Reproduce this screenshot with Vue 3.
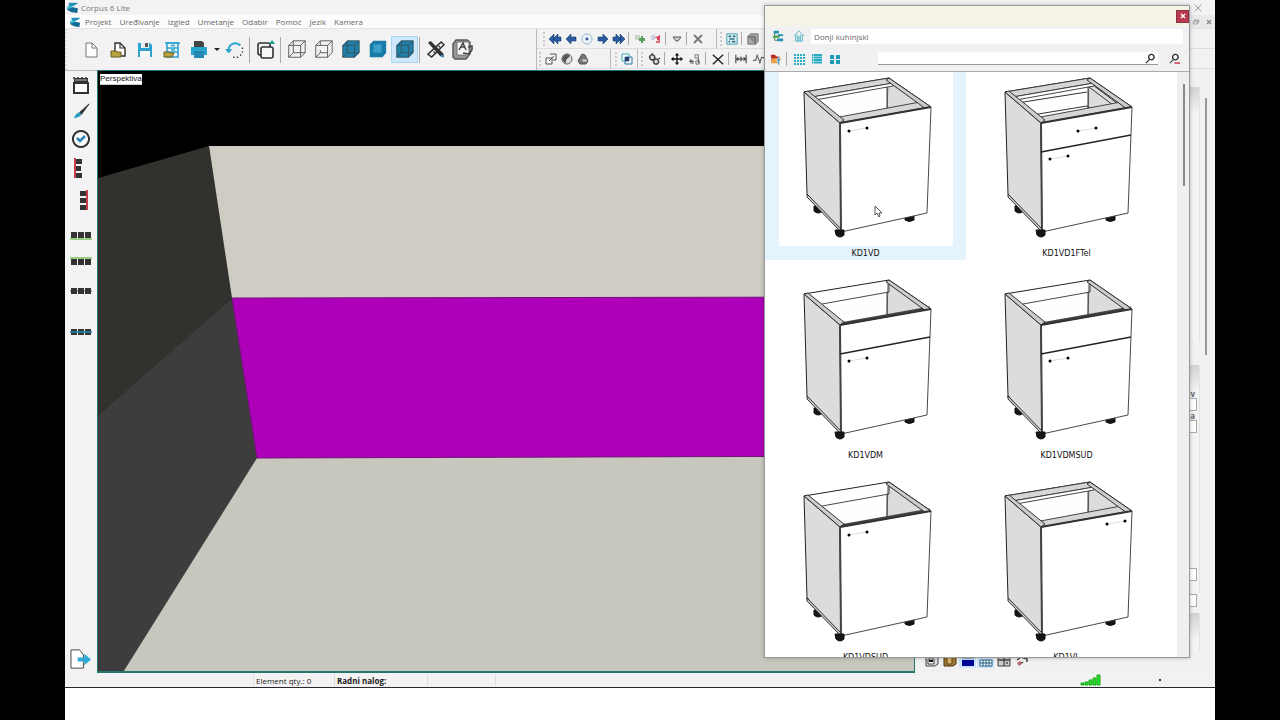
<script setup>
import { h, ref } from 'vue'

const K = '#303030'
const B = '#2aa3cf'
const D = '#1f7fa8'
const N = 'none'

// Each glyph: viewBox side, then [path, fill, stroke, stroke width]
const cubeLines = 'M3 7H16V20H3ZM8 2H21V15H8ZM3 7L8 2M16 7L21 2M16 20L21 15M3 20L8 15'
const glyphs = {
  logo: [14, ['M3 2L13 2Q11 5 5 6L3 5Z', '#1f8fb8', N, 0], ['M1 8L5 6L13 8L12 13L6 12L2 10Z', '#176a94', N, 0], ['M1 6L6 5L7 7L2 9Z', '#39b5cf', N, 0]],
  file: [18, ['M4 2H10L15 7V16H4Z', '#fdfdfd', '#777', 1], ['M10 2V7H15', N, '#777', 1]],
  open: [18, ['M6 2H11L16 7V15H6Z', '#fff', K, 1.4], ['M11 2V7H16', N, K, 1.2], ['M2 10H7L8 11H12V16H2Z', '#b8a340', '#6b5d20', 1]],
  save: [18, ['M2 2H14L16 4V16H2Z', B, N, 0], ['M5 2H13V7H5Z', '#e8edf0', N, 0], ['M9 2H12V6H9Z', '#555', N, 0], ['M4 10H14V16H4Z', '#f7f7f7', N, 0]],
  cabinet: [18, ['M4 2H15V16H4Z', N, B, 1.6], ['M2 2H17M4 7H15M4 11H15M8 4.5H12M8 9H12', N, B, 1.4], ['M1 11H6L7 12H11L9 16H1Z', '#b8a340', '#6b5d20', 1]],
  print: [20, ['M5 1H13L15 3V8H5Z', '#444', N, 0], ['M2 7H18V15H2Z', B, N, 0], ['M5 13H15V18H5Z', '#2589b5', N, 0], ['M5 12H15', N, '#176a94', 1]],
  undo: [20, ['M3 11A7.500 7.500 0 0 1 16 5', N, B, 2.200], ['M-1 9L7 9L3 14Z', B, N, 0], ['M17.500 8H19M17.500 12H19M15.500 15.500H17M12 18H13.500M8 18H9.500', N, K, 1.500]],
  copy: [20, ['M4 3H12Q14 3 14 5V13Q14 15 12 15H4Q2 15 2 13V5Q2 3 4 3Z', '#f2f2f2', K, 1.6], ['M7 7H15Q17 7 17 9V16Q17 18 15 18H7Q5 18 5 16V9Q5 7 7 7Z', '#f7f7f7', K, 1.6], ['M13 4L16 0L19 4Z', '#209a91', N, 0]],
  wire: [23, [cubeLines, N, '#555', 1]],
  wire2: [23, ['M3 7H16V20H3ZM3 7L8 2H21V15L16 20M16 7L21 2M8 2V7M8 15H16M3 20L8 15V12', N, '#555', 1]],
  solid: [23, ['M3 7L8 2H21V15L16 20H3Z', D, N, 0], [cubeLines, N, '#37525e', 1]],
  flat: [23, ['M3 6L7 2H21V15L17 20H3Z', '#187ba8', N, 0], ['M7 6H16V15H7Z', '#3c9fc8', '#2b8fba', 1]],
  tools: [20, ['M16 2L19 5L6 18L2 15Z', '#e8e8e8', K, 1.5], ['M2 3L5 1L18 14L19 18L15 17Z', '#333', N, 0], ['M8 12L10 14M13 6L15 8', N, K, 1.2], ['M16 16L18 18', N, B, 2]],
  render: [22, ['M1 5L4 1H15L18 3V15L14 20H3L1 18Z', '#999', '#555', 1.4], ['M5 3H17V16H5Z', '#f7f7f7', '#777', 1], ['M7 11L11 4L14 11M9 8H13M11 14L17 15L20 11M16 8L20 7L20 11', N, '#444', 1.5]],
  first: [12, ['M0 6L5 1V11ZM4 6L9 1V4H12V8H9V11Z', '#2d5a9e', '#173c70', 0.6]],
  prev: [12, ['M1 6L6 1V4H11V8H6V11Z', '#2d5a9e', '#173c70', 0.6]],
  dot: [12, ['M6 1A5 5 0 1 1 5.9 1Z', '#eef5fa', '#8fb3cc', 1], ['M6 4.5A1.5 1.5 0 1 1 5.9 4.5Z', '#2d5a9e', N, 0]],
  next: [12, ['M11 6L6 1V4H1V8H6V11Z', '#2d5a9e', '#173c70', 0.6]],
  last: [12, ['M12 6L7 1V11ZM8 6L3 1V4H0V8H3V11Z', '#2d5a9e', '#173c70', 0.6]],
  plus: [12, ['M1 2H6V7H1Z', '#c9d6c9', N, 0], ['M5 5H7V3H9V5H11V8H9V10H7V8H5Z', '#55a05a', N, 0]],
  minus: [12, ['M1 3L5 1V7H1Z', '#ccd0e0', N, 0], ['M4 5L10 2V8L7 7V5Z', '#d94b5c', N, 0], ['M6 9H10', N, '#d94b5c', 1.6]],
  funnel: [12, ['M2 4H10L7 8H5Z', '#d0d0d0', '#555', 1]],
  cross: [12, ['M2 2L10 10M10 2L2 10', N, '#777', 1.8]],
  select: [14, ['M1 1H13V13H1Z', '#e3f5f8', '#2d8f9e', 1], ['M3 4H6M8 4H11M4 7H10M3 10H5M7 10H11', N, '#276f80', 2]],
  block: [14, ['M1 4L4 1H13V10L10 13H1Z', '#aaa', '#666', 1], ['M1 4H10V13', '#888', '#666', 1]],
  link: [12, ['M1 5H7V11H1Z', '#f5f5f5', '#555', 1], ['M5 1H11V7H8M4 8L9 3', N, '#555', 1]],
  half: [12, ['M6 1A5 5 0 1 1 5.9 1Z', '#ddd', '#555', 1], ['M2 4A4 4 0 0 1 9 3L5 7V10A4 4 0 0 1 2 4Z', '#555', N, 0]],
  prism: [12, ['M1 8L5 1L8 2L11 8L9 11H3Z', '#777', '#555', 1], ['M5 6H10V9H5Z', '#ddd', '#777', 1]],
  overlap: [12, ['M1 1H8V8H1Z', '#fff', '#3ba3b8', 1], ['M4 4H11V11H4Z', N, '#2d7fa8', 1], ['M4 4H8V8H4Z', '#39386e', N, 0]],
  gears: [14, ['M5 2A3 3 0 1 1 4.9 2ZM9.500 7A3 3 0 1 1 9.400 7Z', '#ddd', '#444', 1.8], ['M5 0V2M1 5H2M12 7L14 6', N, '#444', 1.5]],
  move: [14, ['M7 1V13M1 7H13', N, '#111', 1.5], ['M7 0L9.500 3H4.500ZM7 14L4.500 11H9.500ZM0 7L3 4.500V9.500ZM14 7L11 9.500V4.500Z', '#111', N, 0]],
  snap: [14, ['M7 2H11V6H7ZM2 9H5V12H2ZM8 9H12V13H8Z', '#ddd', '#777', 1], ['M2 7V10M0 10H5M11 6V12', N, '#444', 1]],
  cut: [14, ['M1 2L13 13M13 2L1 13', N, '#222', 1.6]],
  dim: [14, ['M1 2V12M13 2V12M1 7H13M4 5L2 7L4 9M10 5L12 7L10 9M7 4V10', N, '#333', 1.2]],
  zigzag: [14, ['M0 9L3 8L5 3L8 11L10 5L14 6', N, '#555', 1.2], ['M2 7H4V9H2ZM4 2H6V4H4ZM7 10H9V12H7Z', '#777', N, 0]],
  oven: [18, ['M2 2H16V6H2Z', '#333', N, 0], ['M2 7H16V17H2Z', '#fff', '#333', 2], ['M3 4H15', N, '#bbb', 1], ['M2 1V3M6 1V3M10 1V3M14 1V3', N, '#333', 1.5]],
  brush: [20, ['M18 2L8 11L10 13Z', '#333', '#333', 1], ['M2 17Q4 11 8 11L10 13Q8 17 2 17Z', '#2ba0c4', N, 0]],
  check: [20, ['M10 2A8 8 0 1 1 9.900 2Z', '#fafafa', '#333', 2], ['M6 9L9 12L14 7', N, '#2b88b5', 2.600]],
  alignL: [22, ['M5 1V21', N, '#c42a3a', 1.800], ['M6 2H12V7H6ZM6 9H11V14H6ZM6 16H12V21H6Z', '#333', N, 0]],
  alignR: [22, ['M17 1V21', N, '#c42a3a', 1.800], ['M10 2H16V7H10ZM10 9H16V14H10ZM10 16H16V21H10Z', '#333', N, 0]],
  alignB: [22, ['M0 15H22', N, '#65b848', 1.300], ['M1 8H7V14H1ZM8 8H14V14H8ZM15 8H21V14H15Z', '#333', N, 0]],
  alignT: [22, ['M0 7H22', N, '#65b848', 1.300], ['M1 8H7V14H1ZM8 8H14V14H8ZM15 8H21V14H15Z', '#333', N, 0]],
  spread: [22, ['M0 11H22', N, '#4b9ba5', 1.300], ['M1 8H7V14H1ZM8 8H14V14H8ZM15 8H21V14H15Z', '#333', N, 0]],
  spread2: [22, ['M1 8H7V14H1ZM8 8H14V14H8ZM15 8H21V14H15Z', '#333', N, 0], ['M0 11H22', N, '#1b83a8', 1.600]],
  exit: [24, ['M1 2H10L14 7V21H1Z', '#fff', '#444', 1], ['M8 10H15V6L22 12L15 18V14H8Z', '#30a9d6', N, 0]],
  tree: [14, ['M3 2H8M3 7H8M3 12H8M3 2V12', N, '#4f9a48', 1.300], ['M2 1H8V4H2ZM7 5H13V7H7ZM6 10H13V13H6Z', '#2191b5', N, 0], ['M1 7H9V9H1Z', '#4f9a48', N, 0]],
  home: [14, ['M1 7L7 1L13 7M3 6V13H11V6M6 13V8H8V13M5 5V13M9 5V13', N, '#53b3c9', 1]],
  folder: [14, ['M1 2H6L7 4H11V10H2Z', '#b52a20', N, 0], ['M1 11L3 6H13L11 12H1Z', '#eca047', N, 0], ['M7 9L10 5L13 9H11V14H9V9Z', '#3f9fce', '#fff', 0.500]],
  grid: [12, ['M1 1H3V3H1ZM4 1H6V3H4ZM7 1H9V3H7ZM10 1H12V3H10ZM1 4H3V6H1ZM4 4H6V6H4ZM7 4H9V6H7ZM10 4H12V6H10ZM1 7H3V9H1ZM4 7H6V9H4ZM7 7H9V9H7ZM10 7H12V9H10ZM1 10H3V12H1ZM4 10H6V12H4ZM7 10H9V12H7ZM10 10H12V12H10Z', '#2aabc4', N, 0]],
  list: [12, ['M1 2H2.500M3 2H11M1 4.500H2.500M3 4.500H11M1 7H2.500M3 7H11M1 9.500H2.500M3 9.500H11', N, '#2aabc4', 1.900]],
  tiles: [12, ['M1 2H5V6H1ZM7 2H11V6H7ZM1 7H5V11H1ZM7 7H11V11H7Z', '#1e9cba', N, 0]],
  search: [12, ['M7 1.500A3 3 0 1 1 6.900 1.500Z', '#fff', '#222', 1.500], ['M5 7L1 11', N, '#222', 1.300]],
  searchOff: [12, ['M7 1.500A3 3 0 1 1 6.900 1.500Z', '#fff', '#222', 1.500], ['M5 7L1 11', N, '#444', 1.300], ['M6 11H12', N, '#c92b44', 1.500]],
  close: [12, ['M2 2L10 10M10 2L2 10', N, '#8a8a8a', 1]],
  closeX: [12, ['M3 3L9 9M9 3L3 9', N, '#8a8a8a', 2]],
  restore: [12, ['M2 5H8V9H2ZM4 5V3H10V7H8', N, '#8a9298', 1.200]],
  closeW: [12, ['M3 3L9 9M9 3L3 9', N, '#fff', 2.200]],
  part1: [16, ['M2 5L5 2H14V12L11 14H2Z', '#ddd', '#444', 1], ['M4 7H10V12H4Z', '#fff', '#444', 1], ['M5 9H9', N, '#111', 2]],
  part2: [16, ['M2 6L6 2H14V12L11 14H2Z', '#a47a35', '#443010', 1], ['M5 5H10V12H5Z', '#d9b469', '#54401a', 1]],
  part3: [16, ['M2 8H14V14H2Z', '#00009b', N, 0], ['M3 3H7M9 3H13M2 6H14', N, '#369', 1]],
  part4: [16, ['M2 8H14V14H2Z', '#fff', '#235c80', 1], ['M5 8V14M8 8V14M11 8V14M2 11H14M3 4H13', N, '#235c80', 1]],
  part5: [16, ['M2 3H14V14H2Z', '#ccc', '#444', 1], ['M8 3V14M2 8H14M10 11H12', N, '#444', 1.300]],
  part6: [16, ['M3 8L7 5L13 7V10M5 13L9 10', N, '#444', 1.500], ['M3 11L6 9L8 11L5 14Z', '#bb6670', N, 0]],
}

const Icon = ({ name, size }) => {
  const [box, ...paths] = glyphs[name]
  return h('svg', { class: 'icon', width: size, height: size, viewBox: `0 0 ${box} ${box}`, 'aria-hidden': 'true' },
    paths.map(([d, fill, stroke, w]) => h('path', { d, fill, stroke, 'stroke-width': w })))
}
Icon.props = ['name', 'size']

const menus = ['Projekt', 'Uređivanje', 'Izgled', 'Umetanje', 'Odabir', 'Pomoć', 'Jezik', 'Kamera']
const mainTools = [
  ['file', 18], ['open', 18], ['save', 18], ['cabinet', 18], ['print', 20], ['caret'], ['undo', 18], ['|'], ['copy', 20], ['|'],
  ['wire', 21], ['wire2', 21], ['solid', 21], ['flat', 21], ['solid', 21, true], ['|'], ['tools', 19], ['render', 22],
]
const rowOne = [
  ['first', 'prev', 'dot', 'next', 'last', '|', 'plus', 'minus', '|', 'funnel', '|', 'cross'],
  ['select', '|', 'block'],
]
const rowTwo = [['link', 'half', 'prism'], ['overlap'], ['gears', '|', 'move', 'snap', '|', 'cut', '|', 'dim', 'zigzag']]
const sideTools = [['oven', 18], ['brush', 19], ['check', 20], ['alignL', 22], ['alignR', 22], ['alignB', 22], ['alignT', 22], ['spread', 22], ['spread2', 22]]

const cabinets = [
  { name: 'KD1VD', rails: true, handle: [71, 59] },
  { name: 'KD1VD1FTel', rails: true, drawer: true, box: true, knob: true, handle: [71, 87] },
  { name: 'KD1VDM', drawer: true, handle: [71, 87] },
  { name: 'KD1VDMSUD', drawer: true, notch: true, handle: [71, 87] },
  { name: 'KD1VDSUD', notch: true, handle: [71, 59] },
  { name: 'KD1VL', rails: true, handle: [128, 48] },
]
const selected = ref('KD1VD')
const path = ref('Donji kuhinjski')
const query = ref('')
</script>

<template>
  <div class="page">
    <div class="app">
      <header class="titlebar">
        <Icon name="logo" :size="13" /><span>Corpus 6 Lite</span>
        <button class="win" aria-label="Close"><Icon name="close" :size="10" /></button>
      </header>
      <nav class="menubar">
        <Icon name="logo" :size="12" />
        <button v-for="m in menus" :key="m">{{ m }}</button>
        <span class="mdi">
          <button aria-label="Restore"><Icon name="restore" :size="8" /></button>
          <button aria-label="Close document"><Icon name="closeX" :size="8" /></button>
        </span>
      </nav>
      <div class="toolbars">
        <div class="maintools">
          <template v-for="(t, i) in mainTools" :key="i">
            <i v-if="t[0] === '|'" class="sep"></i>
            <button v-else-if="t[0] === 'caret'" class="caret" aria-label="Print options"></button>
            <button v-else :class="{ on: t[2] }" :aria-label="t[0]"><Icon :name="t[0]" :size="t[1]" /></button>
          </template>
        </div>
        <div class="minitools">
          <div v-for="(row, r) in [rowOne, rowTwo]" :key="r" class="minirow" :class="{ second: r === 1 }">
            <div v-for="(g, j) in row" :key="j" class="group">
              <template v-for="(n, i) in g" :key="i">
                <i v-if="n === '|'" class="sep"></i>
                <button v-else :aria-label="n"><Icon :name="n" :size="12" /></button>
              </template>
            </div>
          </div>
        </div>
      </div>

      <main class="work">
        <aside class="side">
          <button v-for="t in sideTools" :key="t[0]" :class="t[0]" :aria-label="t[0]"><Icon :name="t[0]" :size="t[1]" /></button>
          <button class="exit" aria-label="exit"><Icon name="exit" :size="23" /></button>
        </aside>
        <section class="viewport">
          <svg class="scene" viewBox="0 -1 816 600" preserveAspectRatio="xMinYMin slice" aria-label="Room">
            <path d="M0 106L111 74L135 227L0 343Z" fill="#31312d" />
            <path d="M0 343L135 226L159 386L25 602H0Z" fill="#3d3d3d" />
            <path d="M111 74H816V226L134 226Z" fill="#cfccc3" />
            <path d="M134 226L816 225V384L159 386Z" fill="#ae00b8" />
            <path d="M159 386L816 384V602H24Z" fill="#c8c7be" />
            <path d="M134 226L816 225M159 386L816 384M134 226L159 386" fill="none" stroke="#79107f" stroke-width="1" />
          </svg>
          <span class="tag">Perspektiva</span>
        </section>
        <aside class="props">
          <div class="scroll"></div>
          <div class="panel first"></div>
          <div class="panel second">
            <label for="p1">iv</label><input id="p1" />
            <label for="p2">a</label><input id="p2" />
            <input class="low" aria-label="Width" /><input class="lower" aria-label="Height" />
          </div>
          <div class="panel third"></div>
          <div class="parts">
            <button v-for="n in 6" :key="n" :class="{ on: n === 3 || n === 4 }" :aria-label="'View ' + n"><Icon :name="'part' + n" :size="16" /></button>
          </div>
        </aside>
      </main>

      <footer class="status">
        <span class="cell blank"></span>
        <span class="cell qty">Element qty.: 0</span>
        <span class="cell order">Radni nalog:</span>
        <span class="cell extra"></span>
        <svg class="signal" width="21" height="12" viewBox="0 0 21 12"><path d="M1 9H4V11H1ZM5 8H8V11H5ZM9 6H12V11H9ZM13 4H16V11H13ZM17 1H20V11H17Z" fill="#2be52b" stroke="#15a515" /></svg>
        <span class="bullet"></span>
      </footer>
      <div class="below"></div>

      <section class="dialog">
        <div class="dtitle"><button aria-label="Close library"><Icon name="closeW" :size="8" /></button></div>
        <div class="drow">
          <button aria-label="Tree"><Icon name="tree" :size="12" /></button>
          <button aria-label="Home"><Icon name="home" :size="12" /></button>
          <input v-model="path" class="path" aria-label="Folder" />
        </div>
        <div class="drow tools">
          <button aria-label="Up"><Icon name="folder" :size="12" /></button>
          <i class="sep"></i>
          <button aria-label="Small icons"><Icon name="grid" :size="12" /></button>
          <button aria-label="List"><Icon name="list" :size="12" /></button>
          <button aria-label="Tiles"><Icon name="tiles" :size="12" /></button>
          <div class="find">
            <input v-model="query" aria-label="Search" />
            <button aria-label="Search"><Icon name="search" :size="11" /></button>
          </div>
          <button class="off" aria-label="Clear search"><Icon name="searchOff" :size="11" /></button>
        </div>
        <div class="list">
          <div class="cards">
            <button v-for="c in cabinets" :key="c.name" class="card" :class="{ picked: selected === c.name }" @click="selected = c.name">
              <svg class="pic" width="174" height="174" viewBox="1 0 174 174">
                <g stroke-linejoin="round">
                  <path d="M36 134H45V139Q40 143 36 139ZM127 143H136V148Q131 151 127 148Z" fill="#151515" stroke="#111" />
                  <path d="M26 20L111 6L153 35L62 51Z" fill="#fefefe" stroke="#222" />
                  <path d="M110 9L147 35L109 42Z" fill="#dcdcdc" stroke="#333" stroke-width="0.700" />
                  <path v-if="c.box" d="M47 44L108 34L113 37M110 15L134 33M114 13L139 32M38 31L108 20" fill="none" stroke="#333" />
                  <g v-if="c.rails" stroke="#333" stroke-width="0.900">
                    <path d="M26 20L111 6L115 11L34 25Z" fill="#d6d6d6" />
                    <path d="M34 25L115 11V14L37 28Z" fill="#fff" />
                    <path d="M56 46L142 30L151 35L62 51Z" fill="#d6d6d6" />
                    <path d="M109 15V36" fill="none" />
                  </g>
                  <g v-else fill="none" stroke="#333" stroke-width="0.900">
                    <path d="M44 30L111 18V9M109 18V41" />
                    <path d="M62 50L152 34" stroke="#444" stroke-width="3" />
                  </g>
                  <path d="M26 20L62 51L63 160L29 122Z" fill="#dcdcdc" stroke="#222" />
                  <path v-if="c.notch" d="M29 122L32 127L36 131" fill="none" stroke="#222" stroke-width="2" />
                  <path d="M26 20L30 19L66 48L62 51ZM29 122L63 157V160L29 125Z" fill="#ccc" stroke="#222" stroke-width="0.900" />
                  <path d="M108 8L111 6L153 35L148 37Z" fill="#ccc" stroke="#222" stroke-width="0.900" />
                  <path d="M62 51L153 35L149 141L63 160Z" fill="#fff" stroke="#333" stroke-width="0.900" />
                  <path d="M62 52L63 160" stroke="#444" stroke-width="2" />
                  <path d="M62 51L153 35" stroke="#333" stroke-width="2" />
                  <path v-if="c.drawer" d="M62 80L152 63" stroke="#222" stroke-width="1.300" />
                  <path d="M57 158H66V163Q62 167 58 163Z" fill="#151515" stroke="#111" />
                  <g v-for="(p, k) in (c.knob ? [c.handle, [99, 59]] : [c.handle])" :key="k">
                    <path :d="`M${p[0]} ${p[1]}L${p[0] + 18} ${p[1] - 3}`" stroke="#ddd" />
                    <circle :cx="p[0]" :cy="p[1]" r="1.500" /><circle :cx="p[0] + 18" :cy="p[1] - 3" r="1.500" />
                  </g>
                </g>
              </svg>
              <span>{{ c.name }}</span>
            </button>
          </div>
          <div class="bar"><i></i></div>
          <svg class="pointer" width="9" height="13" viewBox="0 0 9 13"><path d="M1 1V10L3 8L5 12L6 11L5 8H8Z" fill="#fff" stroke="#444" stroke-width="0.900" /></svg>
        </div>
      </section>
    </div>
  </div>
</template>

<style>
html, body { margin: 0; background: #000; }
.icon { display: block; flex: none; overflow: visible; }
</style>

<style scoped>
* { box-sizing: border-box; }
button { border: 0; padding: 0; margin: 0; background: none; font: inherit; color: inherit; display: flex; align-items: center; justify-content: center; flex: none; }
input { border: 0; padding: 0; margin: 0; font: inherit; color: inherit; outline: 0; min-width: 0; border-radius: 0; }
.page { min-height: 100vh; display: flex; padding: 0 65px; background: #000; font-family: "Open Sans", "Noto Sans", sans-serif; font-size: 8px; color: #666; }
.app { position: relative; flex: 1; min-width: 0; display: flex; flex-direction: column; background: #f1f1f1; }
.titlebar { height: 15px; display: flex; align-items: center; gap: 2px; background: #f3f3f3; padding: 0 12px 0 1px; color: #777; }
.win { margin-left: auto; }
.menubar { height: 13px; display: flex; align-items: center; gap: 8px; background: #fcfcfc; padding-left: 4px; }
.menubar > svg { margin-right: -4px; }
.mdi { margin-left: auto; display: flex; }
.mdi button { width: 13px; height: 13px; background: #e9e9e9; }
.toolbars { height: 42px; display: flex; border-top: 1px solid #e3e3e3; background: #f2f2f2; }
.maintools { width: 471px; display: flex; align-items: center; padding-left: 10px; border-left: 2px dotted #ddd; }
.maintools button { width: 27px; height: 27px; }
.maintools button.on { background: #cce8fa; box-shadow: inset 0 0 0 1px #a9d5f0; }
.maintools .caret { width: 9px; }
.caret::after { content: ""; border: 3px solid transparent; border-top-color: #222; border-bottom: 0; }
.maintools .sep { width: 3px; height: 26px; }
.sep { flex: none; border-left: 1px solid #aaa; margin-left: 1px; }
.minitools { flex: 1; min-width: 0; border-left: 1px solid #bbb; }
.minirow { height: 20px; display: flex; border-bottom: 1px solid #ddd; }
.group { display: flex; align-items: center; padding: 0 10px 0 6px; border-right: 1px solid #bbb; }
.group::before { content: ""; height: 14px; border-left: 2px dotted #ccc; margin-right: 2px; }
.group button { width: 16px; height: 16px; }
.group .sep { width: 4px; height: 13px; }
.group:last-child { border-right: 0; padding: 0 0 0 3px; }
.second .group:first-child { padding-left: 2px; padding-right: 19px; }
.second .group:nth-child(2) { padding: 0 2px 0 4px; }
.second .group:last-child button { width: 18px; }
.work { flex: 1; min-height: 0; display: flex; }
.side { width: 32px; display: flex; flex-direction: column; align-items: center; border-top: 1px solid #bbb; background: #f3f3f3; }
.side button { width: 30px; height: 27px; }
.side .alignL, .side .alignR { height: 32px; }
.side .alignB { margin-top: 5px; }
.side .spread { margin-top: 2px; }
.side .spread2 { margin-top: 14px; }
.side .exit { margin-top: auto; }
.viewport { position: relative; flex: 1; min-width: 0; border: 1px solid #23776c; border-width: 1px 1px 2px 1px; background: #000; overflow: hidden; }
.scene { position: absolute; inset: 0; width: 100%; height: 100%; }
.tag { position: absolute; left: 2px; top: 3px; height: 11px; line-height: 10px; background: #fff; border: 1px solid #ccc; border-width: 0 0 1px 0; color: #222; font-family: "Liberation Sans", sans-serif; }
.props { position: relative; width: 300px; display: flex; flex-direction: column; padding-top: 17px; background: #f1f1f1; font-weight: 700; }
.scroll { position: absolute; right: 8px; top: 28px; width: 2px; height: 257px; background: #999; }
.panel { margin-right: 15px; border-right: 1px solid #e3e3e3; background: linear-gradient(#d2d2d2, #f3f3f3 25px); }
.panel.first { height: 255px; }
.panel.second { height: 228px; margin-top: 23px; padding-right: 6px; display: flex; flex-direction: column; align-items: flex-end; padding-top: 24px; }
.panel.third { flex: 1; margin-top: 20px; }
.panel label { line-height: 9px; height: 9px; margin-right: -2px; }
.panel input { width: 80px; height: 13px; margin-right: -4px; background: #fff; border: 1px solid #aaa; flex: none; }
.panel .low { margin-top: 135px; }
.panel .lower { margin-top: 13px; }
.parts { display: flex; gap: 1px; padding: 0 0 5px 8px; background: #f1f1f1; }
.parts button { width: 17px; height: 17px; }
.parts .on { background: #cce4fa; }
.status { height: 15px; display: flex; align-items: center; border-bottom: 1px solid #2b2730; background: #f2f2f2; color: #222; }
.cell { height: 12px; line-height: 14px; border-right: 1px solid #ddd; padding-left: 2px; }
.blank { width: 189px; }
.qty { width: 81px; }
.order { width: 93px; font-weight: 700; }
.extra { width: 68px; }
.signal { margin-left: auto; margin-right: 58px; }
.bullet { width: 2px; height: 2px; background: #333; margin-right: 54px; }
.below { height: 32px; background: #fff; }
.dialog { position: absolute; right: 25px; top: 5px; bottom: 62px; width: 426px; display: flex; flex-direction: column; background: #f1f1f1; border: 1px solid #999; box-shadow: 0 0 4px rgba(0, 0, 0, 0.25); }
.dtitle { height: 20px; background: #f5f3e6; display: flex; align-items: center; justify-content: flex-end; }
.dtitle button { width: 13px; height: 13px; background: #b83b50; border: 1px solid #8b3342; }
.drow { height: 20px; display: flex; align-items: center; padding: 0 6px 0 4px; gap: 3px; }
.drow button { width: 18px; height: 18px; }
.drow.tools { height: 26px; gap: 0; padding-left: 2px; border-bottom: 1px solid #aaa; }
.drow .path { flex: 1; height: 15px; background: #fff; padding-left: 3px; }
.tools .sep { height: 14px; width: 4px; }
.find { flex: 1; min-width: 0; display: flex; align-items: center; height: 13px; margin-left: 34px; background: #fff; border-bottom: 1px solid #999; }
.find input { flex: 1; height: 12px; background: #fff; }
.find button { width: 15px; height: 12px; }
.tools .off { margin-left: 7px; }
.list { position: relative; flex: 1; min-height: 0; display: flex; background: #fff; overflow: hidden; }
.cards { flex: 1; min-width: 0; display: grid; grid-template-columns: 201px 201px; grid-auto-rows: 188px; row-gap: 14px; align-content: start; }
.card { flex-direction: column; justify-content: flex-start; color: #111; font-family: "DejaVu Sans", sans-serif; font-size: 8px; line-height: 16px; }
.card.picked { background: #e5f3fc; }
.pic { display: block; flex: none; background: #fff; }
.bar { width: 12px; background: #efefef; padding: 12px 0 0 6px; }
.bar i { display: block; width: 2px; height: 102px; background: #888; }
.pointer { position: absolute; left: 109px; top: 133px; }
</style>
